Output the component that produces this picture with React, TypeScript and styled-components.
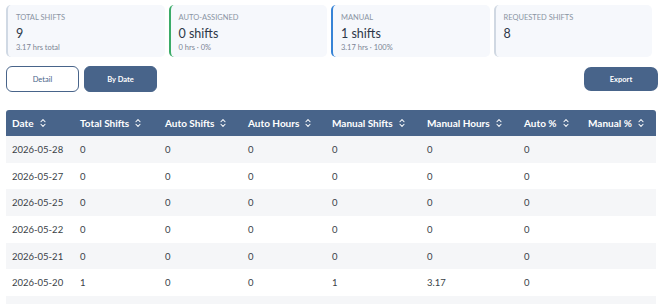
import styled, { createGlobalStyle } from "styled-components";
import { ChevronsUpDown } from "lucide-react";

const GlobalStyle = createGlobalStyle`
    body {
        margin: 0;
        background: #ffffff;
        font-family: "Lato", "Noto Sans", sans-serif;
        color: #2d3748;
    }
`

type Stat = { label: string; value: string; sub?: string; accent: string }

const stats: Stat[] = [
    { label: "Total Shifts", value: "9", sub: "3.17 hrs total", accent: "#d0d9e4" },
    { label: "Auto-Assigned", value: "0 shifts", sub: "0 hrs · 0%", accent: "#3bab68" },
    { label: "Manual", value: "1 shifts", sub: "3.17 hrs · 100%", accent: "#3683d6" },
    { label: "Requested Shifts", value: "8", accent: "#d0d8e2" },
]

const columns = [
    { title: "Date", width: 68 },
    { title: "Total Shifts", width: 85 },
    { title: "Auto Shifts", width: 83 },
    { title: "Auto Hours", width: 84 },
    { title: "Manual Shifts", width: 95 },
    { title: "Manual Hours", width: 97 },
    { title: "Auto %", width: 64 },
    { title: "Manual %", width: 74 },
]

// last row only peeks in at the bottom edge, its text is below the fold
const rows = [
    ["2026-05-28", "0", "0", "0", "0", "0", "0", ""],
    ["2026-05-27", "0", "0", "0", "0", "0", "0", ""],
    ["2026-05-25", "0", "0", "0", "0", "0", "0", ""],
    ["2026-05-22", "0", "0", "0", "0", "0", "0", ""],
    ["2026-05-21", "0", "0", "0", "0", "0", "0", ""],
    ["2026-05-20", "1", "0", "0", "1", "3.17", "0", ""],
    ["", "", "", "", "", "", "", ""],
]

const App = () => {
    return (
        <Page>
            <GlobalStyle />
            <StatGrid>
                {stats.map((s) => (
                    <StatCard key={s.label} $accent={s.accent}>
                        <StatLabel>{s.label}</StatLabel>
                        <StatValue>{s.value}</StatValue>
                        {s.sub && <StatSub>{s.sub}</StatSub>}
                    </StatCard>
                ))}
            </StatGrid>
            <Toolbar>
                <ToggleGroup>
                    <ToolButton>Detail</ToolButton>
                    <ToolButton $active>By Date</ToolButton>
                </ToggleGroup>
                <ExportButton>Export</ExportButton>
            </Toolbar>
            <Table>
                <colgroup>
                    {columns.map((c) => (
                        <col key={c.title} style={{ width: c.width }} />
                    ))}
                </colgroup>
                <thead>
                    <tr>
                        {columns.map((c) => (
                            <HeadCell key={c.title}>
                                <HeadInner>
                                    {c.title}
                                    <ChevronsUpDown size={10} strokeWidth={2.5} />
                                </HeadInner>
                            </HeadCell>
                        ))}
                    </tr>
                </thead>
                <tbody>
                    {rows.map((r, ri) => (
                        <Row key={ri}>
                            {r.map((v, i) => (
                                <Cell key={i}>{v}</Cell>
                            ))}
                        </Row>
                    ))}
                </tbody>
            </Table>
        </Page>
    )
}

const Page = styled.div`
    padding: 5px 13px 0 6px;
    display: flex;
    flex-direction: column;
    height: 304px;
    overflow: hidden;
    box-sizing: border-box;
`

const StatGrid = styled.div`
    display: grid;
    grid-template-columns: repeat(4, 1fr);
    gap: 4px;
    width: 646px;
`

const StatCard = styled.div<{ $accent: string }>`
    background: #f6f8fc;
    border-left: 2px solid ${(p) => p.$accent};
    border-radius: 5px;
    height: 52px;
    box-sizing: border-box;
    padding: 8px 10px 0 8px;
    display: flex;
    flex-direction: column;
`

const StatLabel = styled.div`
    font-size: 7.5px;
    text-transform: uppercase;
    color: #8a94a3;
    line-height: 10px;
`

const StatValue = styled.div`
    font-size: 12.5px;
    color: #2d3748;
    margin-top: 3px;
    line-height: 15px;
`

const StatSub = styled.div`
    font-size: 7.5px;
    color: #7a8494;
    margin-top: 2px;
    line-height: 9px;
`

const Toolbar = styled.div`
    display: flex;
    justify-content: space-between;
    align-items: center;
    margin-top: 9px;
`

const ToggleGroup = styled.div`
    display: flex;
    gap: 5px;
`

const ToolButton = styled.button<{ $active?: boolean }>`
    width: 73px;
    height: 26px;
    border-radius: 6px;
    border: 1.5px solid #48648a;
    background: ${(p) => (p.$active ? "#48648a" : "#ffffff")};
    color: ${(p) => (p.$active ? "#ffffff" : "#48648a")};
    font-family: inherit;
    font-size: 7.5px;
    font-weight: ${(p) => (p.$active ? 700 : 400)};
    cursor: pointer;
`

const ExportButton = styled.button`
    width: 74px;
    height: 24px;
    border-radius: 7px;
    border: none;
    background: #48648a;
    color: #ffffff;
    font-family: inherit;
    font-size: 7.5px;
    font-weight: 700;
    margin-right: -1px;
`

const Table = styled.table`
    margin-top: 18px;
    width: 650px;
    border-collapse: collapse;
    table-layout: fixed;
`

const HeadCell = styled.th`
    background: #48648a;
    color: #ffffff;
    font-size: 10px;
    font-weight: 700;
    text-align: left;
    height: 26px;
    padding: 0 0 0 6px;
    &:first-child {
        border-top-left-radius: 3px;
    }
    &:last-child {
        border-top-right-radius: 3px;
    }
`

const HeadInner = styled.span`
    display: inline-flex;
    align-items: center;
    gap: 4px;
`

const Row = styled.tr`
    height: 26.7px;
    &:nth-child(odd) {
        background: #f5f6f8;
    }
`

const Cell = styled.td`
    font-size: 9.5px;
    color: #3a3f47;
    padding: 0 0 0 6px;
    white-space: nowrap;
`

export default App
